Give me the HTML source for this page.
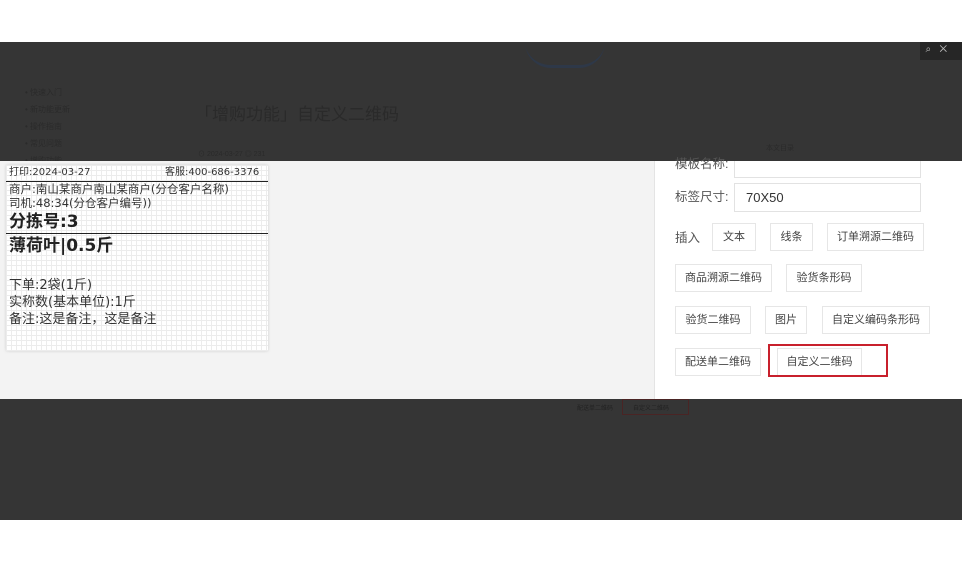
<!DOCTYPE html>
<html><head><meta charset="utf-8"><style>
*{margin:0;padding:0;box-sizing:border-box}
body{width:962px;height:562px;position:relative;background:#fff;font-family:"Liberation Sans","Noto Sans CJK SC",sans-serif;overflow:hidden}
.dark{position:absolute;left:0;top:42px;width:962px;height:478px;background:#353535}
.a{position:absolute}
.strip{position:absolute;left:0;top:161px;width:962px;height:238px;background:#f3f3f3}
.panel{position:absolute;left:654px;top:161px;width:308px;height:238px;background:#fff;border-left:1px solid #e4e4e4}
.btn{position:absolute;height:28px;border:1px solid #e6e6e6;font-size:11px;color:#444;line-height:26px;text-align:center;background:#fff}
.lbl{position:absolute;font-size:12.5px;color:#555;line-height:14px}
.inp{position:absolute;left:734px;width:187px;border:1px solid #e2e2e2;background:#fff;font-size:13px;color:#333;padding-left:11px}
.card{position:absolute;left:6px;top:165px;width:262px;height:186px;background-color:#fff;background-image:linear-gradient(#ececec 1px,transparent 1px),linear-gradient(90deg,#ececec 1px,transparent 1px);background-size:5px 5px;box-shadow:0 0 3px rgba(0,0,0,.15);color:#333;font-family:"DejaVu Sans","Noto Sans CJK SC",sans-serif}
.card div{position:absolute;left:3px;white-space:nowrap}
</style></head><body>
<div class="dark"></div>
<div class="a" style="left:525px;top:42px;width:80px;height:26px;border-bottom:3px solid #2e3848;border-radius:0 0 40px 40px"></div>
<div class="a" style="left:920px;top:42px;width:42px;height:18px;background:#262626;color:#bbb;font-size:10px;line-height:16px">&nbsp;&nbsp;⌕&nbsp;&nbsp;&nbsp;✕</div>
<div class="a" style="left:25px;top:84px;color:#2a2a2a;line-height:17px;font-size:8px">• 快速入门<br>• 新功能更新<br>• 操作指南<br>• 常见问题<br>• 增购功能</div>
<div class="a" style="left:195px;top:100px;font-size:17px;color:#2a2a2a">「增购功能」自定义二维码</div>
<div class="a" style="left:198px;top:149px;font-size:7px;color:#2a2a2a">⊙ 2024-03-27 ◎ 231</div>
<div class="a" style="left:766px;top:143px;font-size:7px;color:#2a2a2a">本文目录</div>
<div class="strip"></div>
<div class="card">
<div style="top:1px;font-size:10px;line-height:13px">打印:2024-03-27</div>
<div style="top:1px;left:159px;font-size:10px;line-height:13px">客服:400-686-3376</div>
<div style="top:16px;left:0;width:262px;height:1px;background:#222"></div>
<div style="top:17px;font-size:11.5px;line-height:14px">商户:南山某商户南山某商户(分仓客户名称)</div>
<div style="top:31px;font-size:11.5px;line-height:14px">司机:48:34(分仓客户编号))</div>
<div style="top:46px;font-size:17px;line-height:22px;font-weight:bold;color:#222">分拣号:3</div>
<div style="top:68px;left:0;width:262px;height:1px;background:#222"></div>
<div style="top:70px;font-size:17px;line-height:22px;font-weight:bold;color:#222">薄荷叶|0.5斤</div>
<div style="top:112px;font-size:13px;line-height:17px">下单:2袋(1斤)<br>实称数(基本单位):1斤<br>备注:这是备注，这是备注</div>
</div>
<div class="panel"></div>
<div class="lbl" style="left:675px;top:157px">模板名称:</div>
<div class="inp" style="top:161px;height:17px;border-top:none"></div>
<div class="lbl" style="left:675px;top:190px">标签尺寸:</div>
<div class="inp" style="top:183px;height:29px;line-height:27px">70X50</div>
<div class="lbl" style="left:675px;top:231px">插入</div>
<div class="btn" style="left:712px;top:223px;width:44px">文本</div>
<div class="btn" style="left:770px;top:223px;width:43px">线条</div>
<div class="btn" style="left:827px;top:223px;width:97px">订单溯源二维码</div>
<div class="btn" style="left:675px;top:264px;width:97px">商品溯源二维码</div>
<div class="btn" style="left:786px;top:264px;width:76px">验货条形码</div>
<div class="btn" style="left:675px;top:306px;width:76px">验货二维码</div>
<div class="btn" style="left:765px;top:306px;width:42px">图片</div>
<div class="btn" style="left:822px;top:306px;width:108px">自定义编码条形码</div>
<div class="btn" style="left:675px;top:348px;width:86px">配送单二维码</div>
<div class="btn" style="left:777px;top:348px;width:85px">自定义二维码</div>
<div class="a" style="left:768px;top:344px;width:120px;height:33px;border:2px solid #c8202c"></div>
<div class="a" style="left:577px;top:403px;font-size:6px;color:#222">配送单二维码</div>
<div class="a" style="left:622px;top:399px;width:67px;height:16px;border:1px solid #4a2424;font-size:6px;color:#222;padding:3px 0 0 10px">自定义二维码</div>
</body></html>
